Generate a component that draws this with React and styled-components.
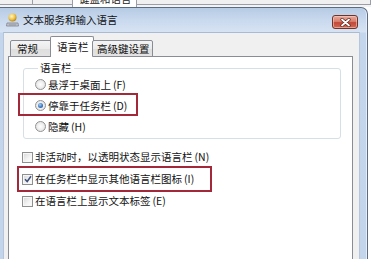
import React from 'react';
import styled, { createGlobalStyle } from 'styled-components';

const Global = createGlobalStyle`
  html, body { margin: 0; padding: 0; background: #ffffff; }
  body {
    width: 371px; height: 259px; overflow: hidden;
    font-family: "Noto Sans CJK SC", "Noto Sans", sans-serif;
    color: #1a1a1a;
  }
`;

const Page = styled.div`
  width: 371px;
  height: 259px;
  overflow: hidden;
  display: flex;
  flex-direction: column;
  background: #ffffff;
`;

/* ---------- dialog behind (only its tab strip bottom is visible) ---------- */
const BackStrip = styled.div`
  height: 7px;
  flex: none;
  display: flex;
  align-items: flex-start;
  background: #f3f3f3;
  overflow: hidden;
`;

const BackTab = styled.div`
  flex: ${p => (p.$grow ? 1 : 'none')};
  width: ${p => (p.$w ? `${p.$w}px` : 'auto')};
  height: ${p => (p.$active ? 7 : 5)}px;
  box-sizing: border-box;
  border-right: 1px solid #9a9ea6;
  border-bottom: ${p => (p.$active ? 'none' : '1px solid #9a9ea6')};
  background: ${p => (p.$active ? '#ffffff' : '#f0f0f0')};
  ${p => p.$active && 'border-left: 1px solid #9a9ea6; margin-left: -1px;'}
  overflow: hidden;
  padding-left: 6px;
`;

const BackTabText = styled.span`
  display: block;
  font-size: 10.5px;
  line-height: 12px;
  margin-top: -7px;
  color: #222;
  white-space: nowrap;
`;

/* ---------- window ---------- */
const Window = styled.div`
  flex: 1;
  width: 368px;
  box-sizing: border-box;
  display: flex;
  flex-direction: column;
  border-top: 1px solid #5b6b80;
  border-right: 1px solid #5b6b80;
  border-radius: 0 7px 0 0;
  padding: 0 7px 0 3px;
  background: linear-gradient(180deg, #b6cbe4 0px, #c9d9ee 12px, #d6e3f3 24px, #c4d6ec 25px, #c2d5eb 100%);
  box-shadow: inset -1px 0 0 #e4edf8;
`;

const TitleBar = styled.div`
  height: 24px;
  flex: none;
  display: flex;
  align-items: center;
  padding-left: 3px;
`;

const AppIcon = styled.svg`
  width: 13px;
  height: 14px;
  flex: none;
  margin-right: 4px;
`;

const Title = styled.span`
  font-size: 10.5px;
  line-height: 12px;
  color: #111;
  white-space: nowrap;
  flex: 1;
`;

const CloseButton = styled.div`
  align-self: flex-start;
  margin-top: 7px;
  margin-right: 2px;
  width: 26px;
  height: 14px;
  box-sizing: border-box;
  border: 1px solid #6e3428;
  border-radius: 3px;
  background: linear-gradient(180deg, #e9a99c 0%, #d8806e 45%, #c4473a 55%, #cf6a54 100%);
  box-shadow: inset 0 0 0 1px rgba(255, 210, 200, 0.55);
  display: flex;
  align-items: center;
  justify-content: center;
`;

const Client = styled.div`
  flex: 1;
  display: flex;
  flex-direction: column;
  background: #f0f0f0;
  padding: 4px 6px 0 4px;
  border-top: 1px solid #a9bbd2;
  border-left: 1px solid #b5c6dc;
  border-right: 1px solid #b5c6dc;
`;

/* ---------- tabs ---------- */
const TabRow = styled.div`
  display: flex;
  align-items: flex-end;
  height: 20px;
  padding-left: 2px;
  margin-bottom: -1px;
  position: relative;
  z-index: 1;
`;

const Tab = styled.div`
  width: ${p => p.$w}px;
  height: ${p => (p.$active ? 21 : 17)}px;
  box-sizing: border-box;
  display: flex;
  align-items: center;
  padding-left: ${p => p.$pl}px;
  padding-top: ${p => (p.$active ? 0 : 1)}px;
  border: 1px solid #898c95;
  border-bottom: ${p => (p.$active ? 'none' : '1px solid #898c95')};
  border-radius: 2px 2px 0 0;
  background: ${p => (p.$active ? '#ffffff' : 'linear-gradient(180deg, #f4f4f4 0%, #ebebeb 50%, #dedede 51%, #e3e3e3 100%)')};
  margin-left: ${p => p.$ml}px;
  margin-right: ${p => p.$mr || 0}px;
  font-size: 10.5px;
  line-height: 12px;
  white-space: nowrap;
  color: #111;
`;

const Panel = styled.div`
  flex: 1;
  box-sizing: border-box;
  border: 1px solid #898c95;
  border-bottom: none;
  background: #ffffff;
  padding: 5px 12px 0 13px;
  display: flex;
  flex-direction: column;
`;

/* ---------- group box ---------- */
const Group = styled.fieldset`
  margin: 0 0 7px 1px;
  width: 318px;
  box-sizing: border-box;
  border: 1px solid #d5dfe5;
  border-radius: 3px;
  padding: 0 0 1px 11px;
  min-width: 0;
`;

const Legend = styled.legend`
  padding: 0 2px;
  margin-left: 3px;
  font-size: 10.5px;
  line-height: 12px;
  color: #111;
`;

const OptionRow = styled.div`
  position: relative;
  display: flex;
  align-items: center;
  height: ${p => p.$h}px;
  font-size: 10.5px;
  line-height: 12px;
  white-space: nowrap;
  color: #111;
`;

const Radio = styled.span`
  width: 11px;
  height: 11px;
  flex: none;
  box-sizing: border-box;
  border-radius: 50%;
  border: 1px solid #929292;
  background: radial-gradient(circle at 50% 50%, #ffffff 0%, #f2f2f2 40%, #d9d9d9 100%);
  margin-right: 2px;
  display: flex;
  align-items: center;
  justify-content: center;
  &::after {
    content: '';
    display: ${p => (p.$on ? 'block' : 'none')};
    width: 5px;
    height: 5px;
    border-radius: 50%;
    background: radial-gradient(circle at 40% 35%, #a9d0f5 0%, #3b79c4 55%, #1b4f91 100%);
  }
`;

const Box = styled.span`
  width: 11px;
  height: 11px;
  flex: none;
  box-sizing: border-box;
  border: 1px solid #8f8f8f;
  background: linear-gradient(135deg, #d6d6d6 0%, #f4f4f4 60%, #ffffff 100%);
  box-shadow: inset 0 0 0 1px #f7f7f7;
  margin-right: 2px;
  display: flex;
  align-items: center;
  justify-content: center;
`;

const Key = styled.span`
  margin-left: 2px;
`;

const Mark = styled.span`
  position: absolute;
  left: ${p => p.$l}px;
  top: ${p => p.$t}px;
  width: ${p => p.$w}px;
  height: ${p => p.$h}px;
  box-sizing: border-box;
  border: 2px solid #a3293a;
  pointer-events: none;
`;

const Label = ({ text, k }) => (
  <>
    <span>{text}</span>
    <Key>({k})</Key>
  </>
);

export default function App() {
  return (
    <Page>
      <Global />
      <BackStrip>
        <BackTab $w={33} />
        <BackTab $w={40} />
        <BackTab $w={65} $active>
          <BackTabText>键盘和语言</BackTabText>
        </BackTab>
        <BackTab $grow />
      </BackStrip>

      <Window>
        <TitleBar>
          <AppIcon viewBox="0 0 13 14">
            <defs>
              <radialGradient id="bulb" cx="40%" cy="35%" r="65%">
                <stop offset="0%" stopColor="#fff6c8" />
                <stop offset="60%" stopColor="#f1c64a" />
                <stop offset="100%" stopColor="#b88a1c" />
              </radialGradient>
            </defs>
            <circle cx="6.5" cy="4.5" r="4" fill="url(#bulb)" />
            <path d="M1 10 L12 10 L12.5 13 L0.5 13 Z" fill="#c9ccd2" stroke="#7d828c" strokeWidth="0.8" />
            <path d="M2.5 11.3 H10.5 M3 12.2 H10" stroke="#8d929b" strokeWidth="0.6" />
          </AppIcon>
          <Title>文本服务和输入语言</Title>
          <CloseButton>
            <svg width="11" height="9" viewBox="0 0 11 9">
              <path d="M2 1.5 L9 7.5 M9 1.5 L2 7.5" stroke="#5a2418" strokeWidth="3.2" strokeLinecap="round" />
              <path d="M2 1.5 L9 7.5 M9 1.5 L2 7.5" stroke="#ffffff" strokeWidth="1.8" strokeLinecap="round" />
            </svg>
          </CloseButton>
        </TitleBar>

        <Client>
          <TabRow>
            <Tab $w={43} $pl={6} $ml={0}>常规</Tab>
            <Tab $w={44} $pl={6} $ml={-3} $mr={-2} $active>语言栏</Tab>
            <Tab $w={61} $pl={4} $ml={0}>高级键设置</Tab>
          </TabRow>

          <Panel>
            <Group>
              <Legend>语言栏</Legend>
              <OptionRow $h={21}>
                <Radio />
                <Label text="悬浮于桌面上" k="F" />
              </OptionRow>
              <OptionRow $h={21}>
                <Mark $l={-17} $t={-2} $w={120} $h={23} />
                <Radio $on />
                <Label text="停靠于任务栏" k="D" />
              </OptionRow>
              <OptionRow $h={21}>
                <Radio />
                <Label text="隐藏" k="H" />
              </OptionRow>
            </Group>

            <OptionRow $h={22}>
              <Box />
              <Label text="非活动时，以透明状态显示语言栏" k="N" />
            </OptionRow>
            <OptionRow $h={22}>
              <Mark $l={-5} $t={-2} $w={195} $h={26} />
              <Box>
                <svg width="8" height="8" viewBox="0 0 8 8">
                  <path d="M1 4.2 L3.2 6.5 L7 1.2" fill="none" stroke="#3d4f7a" strokeWidth="1.5" />
                </svg>
              </Box>
              <Label text="在任务栏中显示其他语言栏图标" k="I" />
            </OptionRow>
            <OptionRow $h={22}>
              <Box />
              <Label text="在语言栏上显示文本标签" k="E" />
            </OptionRow>
          </Panel>
        </Client>
      </Window>
    </Page>
  );
}
